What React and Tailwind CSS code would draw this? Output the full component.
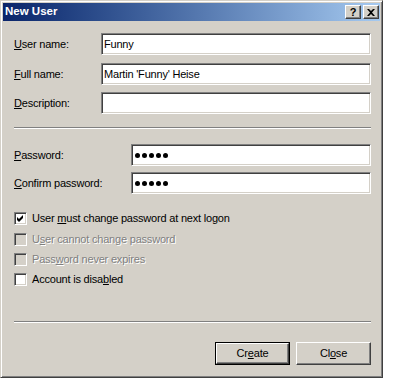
import React from "react";

const font = { fontFamily: '"Liberation Sans", Arial, sans-serif' };

function Field({ label, value, labelWidth, password }) {
  return (
    <div className="flex items-center h-[22px]">
      <div className={labelWidth}>{label}</div>
      <div className="flex-1 h-[22px] flex items-center bg-white border border-t-[#808080] border-l-[#808080] border-b-white border-r-white shadow-[inset_1px_1px_0_#404040,inset_-1px_-1px_0_#d4d0c8] pl-[2px]">
        {password ? (
          <div className="flex gap-[2px] pl-[1px]">
            {[0, 1, 2, 3, 4].map((i) => (
              <span key={i} className="w-[5px] h-[5px] rounded-full bg-black" />
            ))}
          </div>
        ) : (
          <span>{value}</span>
        )}
      </div>
    </div>
  );
}

function Check({ checked, disabled, children, className }) {
  return (
    <div className={`flex items-center h-[13px] ${className}`}>
      <div
        className={`w-[13px] h-[13px] flex items-center justify-center border border-t-[#808080] border-l-[#808080] border-b-white border-r-white shadow-[inset_1px_1px_0_#404040,inset_-1px_-1px_0_#d4d0c8] ${
          disabled ? "bg-[#d4d0c8]" : "bg-white"
        }`}
      >
        {checked && (
          <svg width="7" height="7" viewBox="0 0 7 7">
            <path d="M0 2 L2 4 L6 0 L6 3 L2 7 L0 5 Z" fill="#000" />
          </svg>
        )}
      </div>
      <span
        className={`ml-[5px] ${
          disabled ? "text-[#808080] [text-shadow:1px_1px_0_#fff]" : "text-black"
        }`}
      >
        {children}
      </span>
    </div>
  );
}

const U = ({ children }) => <u className="underline-offset-[1px]">{children}</u>;

function Button({ children, isDefault }) {
  return (
    <div
      className={`w-[75px] h-[23px] ${
        isDefault ? "border border-black" : ""
      }`}
    >
      <div className="w-full h-full flex items-center justify-center border border-t-white border-l-white border-r-[#404040] border-b-[#404040] shadow-[inset_-1px_-1px_0_#808080]">
        {children}
      </div>
    </div>
  );
}

export default function App() {
  return (
    <div className="bg-white w-[400px] h-[379px] text-[11px] text-black" style={font}>
      <div className="w-[383px] h-[378px] bg-[#d4d0c8] border border-t-[#d4d0c8] border-l-[#d4d0c8] border-r-[#404040] border-b-[#404040] shadow-[inset_1px_1px_0_#fff,inset_-1px_-1px_0_#808080] p-[2px] flex flex-col">
        {/* title bar */}
        <div className="h-[18px] flex items-center bg-linear-to-r from-[#0a246a] to-[#a6caf0] pl-[2px] pr-[1px]">
          <span className="text-white font-bold flex-1 text-[11.5px]">New User</span>
          <div className="w-[16px] h-[14px] bg-[#d4d0c8] flex items-center justify-center border border-t-white border-l-white border-r-[#404040] border-b-[#404040] shadow-[inset_-1px_-1px_0_#808080] font-bold text-[11px] leading-none">
            ?
          </div>
          <div className="ml-[2px] w-[16px] h-[14px] bg-[#d4d0c8] flex items-center justify-center border border-t-white border-l-white border-r-[#404040] border-b-[#404040] shadow-[inset_-1px_-1px_0_#808080]">
            <svg width="8" height="7" viewBox="0 0 8 7">
              <path d="M0 0 H2 L4 2 L6 0 H8 L5 3.5 L8 7 H6 L4 5 L2 7 H0 L3 3.5 Z" fill="#000" />
            </svg>
          </div>
        </div>

        {/* body */}
        <div className="flex-1 flex flex-col pl-[11px] pr-[9px] pt-[12px] tracking-[-0.2px]">
          <Field labelWidth="w-[87px]" label={<><U>U</U>ser name:</>} value="Funny" />
          <div className="mt-[8px]">
            <Field labelWidth="w-[87px]" label={<><U>F</U>ull name:</>} value="Martin 'Funny' Heise" />
          </div>
          <div className="mt-[7px]">
            <Field labelWidth="w-[87px]" label={<><U>D</U>escription:</>} value="" />
          </div>

          <div className="mt-[13px] h-[2px] border-t border-t-[#808080] border-b border-b-white" />

          <div className="mt-[15px]">
            <Field labelWidth="w-[117px]" label={<><U>P</U>assword:</>} password />
          </div>
          <div className="mt-[6px]">
            <Field labelWidth="w-[117px]" label={<><U>C</U>onfirm password:</>} password />
          </div>

          <Check checked className="mt-[18px]">
            User <U>m</U>ust change password at next logon
          </Check>
          <Check disabled className="mt-[8px]">
            U<U>s</U>er cannot change password
          </Check>
          <Check disabled className="mt-[7px]">
            Pass<U>w</U>ord never expires
          </Check>
          <Check className="mt-[7px]">
            Account is disa<U>b</U>led
          </Check>

          <div className="mt-[35px] h-[2px] border-t border-t-[#808080] border-b border-b-white" />

          <div className="mt-[19px] flex justify-end gap-[6px]">
            <Button isDefault>
              Cr<U>e</U>ate
            </Button>
            <Button>
              Cl<U>o</U>se
            </Button>
          </div>
        </div>
      </div>
    </div>
  );
}
